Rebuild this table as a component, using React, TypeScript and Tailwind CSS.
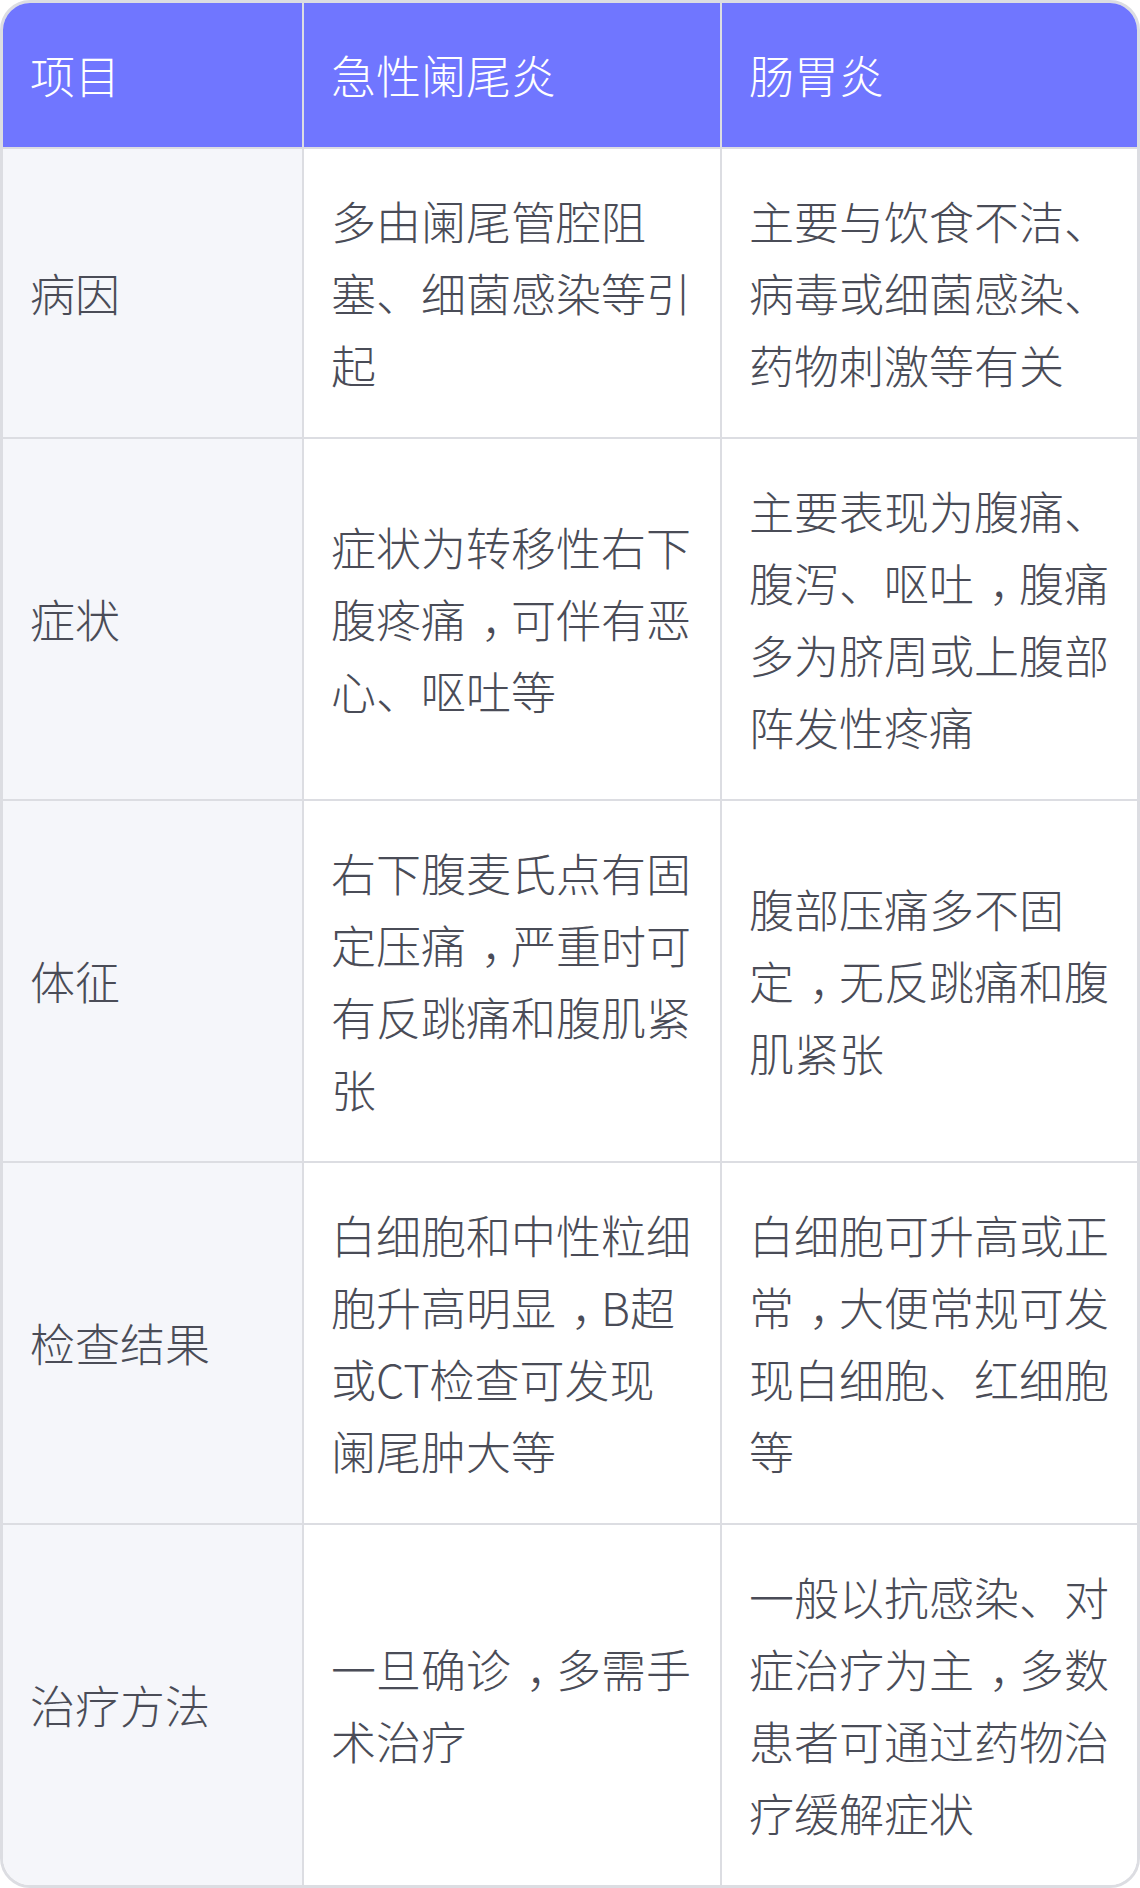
import React from "react";

const rows: [string, string, string][] = [
  ["病因", "多由阑尾管腔阻塞、细菌感染等引起", "主要与饮食不洁、病毒或细菌感染、药物刺激等有关"],
  ["症状", "症状为转移性右下腹疼痛，可伴有恶心、呕吐等", "主要表现为腹痛、腹泻、呕吐，腹痛多为脐周或上腹部阵发性疼痛"],
  ["体征", "右下腹麦氏点有固定压痛，严重时可有反跳痛和腹肌紧张", "腹部压痛多不固定，无反跳痛和腹肌紧张"],
  ["检查结果", "白细胞和中性粒细胞升高明显，B超或CT检查可发现阑尾肿大等", "白细胞可升高或正常，大便常规可发现白细胞、红细胞等"],
  ["治疗方法", "一旦确诊，多需手术治疗", "一般以抗感染、对症治疗为主，多数患者可通过药物治疗缓解症状"],
];

function Txt({ s }: { s: string }) {
  const parts = s.split("，");
  return (
    <span>
      {parts.map((p, i) => (
        <React.Fragment key={i}>
          {p}
          {i < parts.length - 1 && <span className="relative left-[15px]">，</span>}
        </React.Fragment>
      ))}
    </span>
  );
}

export default function App() {
  return (
    <div
      className="w-[1140px] bg-white font-light"
      style={{ fontFamily: '"Noto Sans CJK SC", "Noto Sans", sans-serif' }}
    >
      <div className="w-[1140px] overflow-hidden rounded-[30px] border-[3px] border-[#dcdde2] text-[45px] leading-[72px]">
        <div className="flex border-b-2 border-[#dcdde2] bg-[#7076ff] text-white">
          <div className="flex w-[301px] shrink-0 items-center border-r-2 border-[#dcdde2] px-[27px] py-[36px]">项目</div>
          <div className="flex w-[418px] shrink-0 items-center border-r-2 border-[#dcdde2] px-[27px] py-[36px]">急性阑尾炎</div>
          <div className="flex w-[415px] shrink-0 items-center px-[27px] py-[36px]">肠胃炎</div>
        </div>
        {rows.map((r, i) => (
          <div
            key={i}
            className={
              i < rows.length - 1
                ? "flex border-b-2 border-[#dcdde2] text-[#4a4c57]"
                : "flex text-[#4a4c57]"
            }
          >
            <div className="flex w-[301px] shrink-0 items-center border-r-2 border-[#dcdde2] bg-[#f5f6fa] px-[27px] py-[36px]">
              {r[0]}
            </div>
            <div className="flex w-[418px] shrink-0 items-center border-r-2 border-[#dcdde2] bg-white px-[27px] py-[36px]">
              <Txt s={r[1]} />
            </div>
            <div className="flex w-[415px] shrink-0 items-center bg-white px-[27px] py-[36px]">
              <Txt s={r[2]} />
            </div>
          </div>
        ))}
      </div>
    </div>
  );
}
